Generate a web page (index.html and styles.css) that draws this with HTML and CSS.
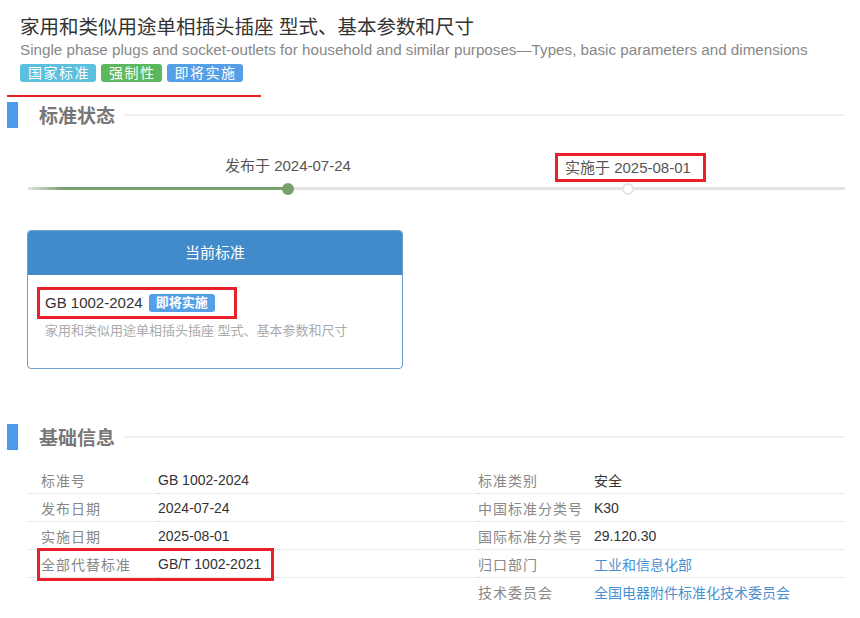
FILE: index.html
```html
<!DOCTYPE html>
<html lang="zh-CN">
<head>
    <meta charset="UTF-8">
    <meta name="viewport" content="width=device-width, initial-scale=1.0">
    <title>GB 1002-2024</title>
    <link rel="stylesheet" href="styles.css">
</head>
<body>

    <div class="page">
        <div class="head">
            <h1 class="title">家用和类似用途单相插头插座 型式、基本参数和尺寸</h1>
            <div class="subtitle">Single phase plugs and socket-outlets for household and similar purposes—Types, basic parameters and dimensions</div>
            <div class="tags">
                <span class="tag tag-info">国家标准</span>
                <span class="tag tag-success">强制性</span>
                <span class="tag tag-primary">即将实施</span>
            </div>
        </div>
        <div class="underline"></div>

        <!-- 标准状态 -->
        <div class="section-head">
            <span class="bar"></span>
            <h2>标准状态</h2>
            <span class="rule"></span>
        </div>

        <div class="timeline">
            <div class="track">
                <div class="done"></div>
            </div>
            <span class="point point-pub"></span>
            <span class="point point-impl"></span>
            <span class="label label-pub">发布于 2024-07-24</span>
            <span class="label label-impl mark">实施于 2025-08-01</span>
        </div>

        <div class="card">
            <div class="card-head">当前标准</div>
            <div class="card-body">
                <div class="std-no mark">GB 1002-2024 <span class="badge">即将实施</span></div>
                <div class="std-desc">家用和类似用途单相插头插座 型式、基本参数和尺寸</div>
            </div>
        </div>

        <!-- 基础信息 -->
        <div class="section-head section-info">
            <span class="bar"></span>
            <h2>基础信息</h2>
            <span class="rule"></span>
        </div>

        <table class="info">
            <tr>
                <td class="k k1">标准号</td>
                <td class="v v1">GB 1002-2024</td>
                <td class="k k2">标准类别</td>
                <td class="v">安全</td>
            </tr>
            <tr>
                <td class="k k1">发布日期</td>
                <td class="v v1">2024-07-24</td>
                <td class="k k2">中国标准分类号</td>
                <td class="v">K30</td>
            </tr>
            <tr>
                <td class="k k1">实施日期</td>
                <td class="v v1">2025-08-01</td>
                <td class="k k2">国际标准分类号</td>
                <td class="v">29.120.30</td>
            </tr>
            <tr>
                <td class="k k1 boxed"><span class="row-mark"></span>全部代替标准</td>
                <td class="v v1">GB/T 1002-2021</td>
                <td class="k k2">归口部门</td>
                <td class="v"><a href="#">工业和信息化部</a></td>
            </tr>
            <tr>
                <td class="k k1"></td>
                <td class="v v1"></td>
                <td class="k k2">技术委员会</td>
                <td class="v"><a href="#">全国电器附件标准化技术委员会</a></td>
            </tr>
        </table>
    </div>

</body>
</html>
```

FILE: styles.css
```css
body {
    margin: 0;
    background-color: #fff;
    font-family: "Liberation Sans", "Noto Sans CJK SC", sans-serif;
    color: #333;
}
.page {
    width: 838px;
    margin-left: 7px;
}
.head {
    padding: 14px 0 0 13px;
}
.title {
    margin: 0;
    font-size: 19.5px;
    font-weight: normal;
    line-height: 26px;
    color: #333;
}
.subtitle {
    font-size: 15.2px;
    line-height: 20px;
    color: #888;
    white-space: nowrap;
}
.tags {
    display: flex;
    gap: 5px;
    margin-top: 4px;
}
.tag {
    display: inline-block;
    height: 18px;
    line-height: 18px;
    padding: 0 6px 0 8px;
    font-size: 14px;
    letter-spacing: 1.5px;
    color: #fff;
    border-radius: 3px;
}
.tag-info {
    background-color: #5bc0de;
}
.tag-success {
    background-color: #5cb85c;
}
.tag-primary {
    background-color: #559ee8;
}
.underline {
    width: 254px;
    height: 2px;
    margin-top: 13px;
    background-color: #e8202a;
}

/* section titles */
.section-head {
    display: flex;
    align-items: center;
    height: 26px;
    margin-top: 5px;
}
.section-head .bar {
    width: 11px;
    height: 26px;
    background-color: #4c9be8;
}
.section-head h2 {
    margin: 0 0 0 21px;
    padding-top: 4px;
    font-size: 19px;
    line-height: 26px;
    color: #777;
}
.section-head .rule {
    flex: 1;
    height: 2px;
    margin-left: 10px;
    background-color: #f0f0f0;
}
.section-info {
    margin-top: 55px;
}

/* timeline */
.timeline {
    position: relative;
    width: 817px;
    height: 60px;
    margin: 23px 0 0 21px;
}
.track {
    position: absolute;
    left: 0;
    right: 0;
    top: 36px;
    height: 3px;
    background-color: #e3e3e3;
}
.track .done {
    width: 260px;
    height: 3px;
    background: linear-gradient(to right, rgba(122, 160, 110, 0), #7aa06e 35px);
}
.point {
    position: absolute;
    top: 32px;
    width: 12px;
    height: 12px;
    margin-left: -6px;
    border-radius: 50%;
    box-sizing: border-box;
}
.point-pub {
    left: 260px;
    background-color: #7aa06e;
}
.point-impl {
    left: 600px;
    background-color: #fff;
    border: 2px solid #e3e3e3;
}
.label {
    position: absolute;
    font-size: 15px;
    line-height: 22px;
    color: #555;
    white-space: nowrap;
}
.label-pub {
    left: 197px;
    top: 4px;
}
.label-impl {
    left: 527px;
    top: 2px;
    line-height: 23px;
    padding: 0 12px 0 7px;
}
.mark {
    border: 3px solid #e8202a;
}

/* current standard card */
.card {
    width: 376px;
    height: 139px;
    margin: 19px 0 0 20px;
    box-sizing: border-box;
    border: 1px solid #6f9fd2;
    border-radius: 4px;
    overflow: hidden;
}
.card-head {
    height: 44px;
    line-height: 44px;
    text-align: center;
    font-size: 15px;
    color: #fff;
    background-color: #428bca;
}
.card-body {
    padding: 12px 0 0 9px;
}
.std-no {
    display: inline-block;
    width: 200px;
    box-sizing: border-box;
    padding-left: 5px;
    font-size: 15px;
    line-height: 26px;
    color: #333;
}
.badge {
    display: inline-block;
    height: 18px;
    line-height: 18px;
    padding: 0 7px;
    margin-left: 2px;
    font-size: 13px;
    font-weight: bold;
    color: #fff;
    background-color: #559ee8;
    border-radius: 3px;
    vertical-align: 1px;
}
.std-desc {
    margin: 3px 0 0 8px;
    font-size: 13px;
    line-height: 18px;
    color: #aaa;
}

/* basic info table */
.info {
    width: 818px;
    margin: 16px 0 0 20px;
    border-collapse: collapse;
    font-size: 14px;
}
.info td {
    height: 27px;
    padding: 0;
    border-bottom: 1px dotted #d8d8d8;
    white-space: nowrap;
}
.info tr:last-child td {
    border-bottom: none;
}
.info .k {
    color: #888;
    letter-spacing: 1px;
}
.info .k1 {
    width: 117px;
    padding-left: 14px;
}
.info .v1 {
    width: 320px;
}
.info .k2 {
    width: 116px;
}
.info .v {
    color: #333;
}
.info a {
    color: #4a8fd2;
    text-decoration: none;
}
.info .boxed {
    position: relative;
}
.row-mark {
    position: absolute;
    left: 10px;
    top: -2px;
    width: 237px;
    height: 33px;
    box-sizing: border-box;
    border: 3px solid #e8202a;
}
```
